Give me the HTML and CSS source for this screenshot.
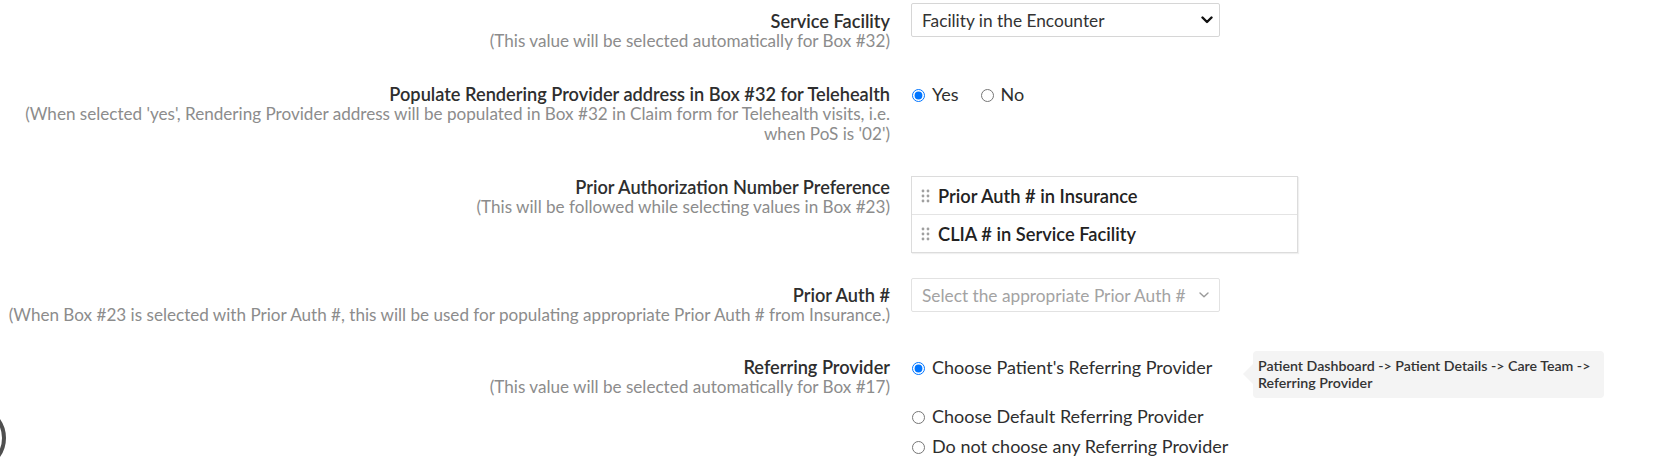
FILE: index.html
```html
<!DOCTYPE html>
<html lang="en">
<head>
<meta charset="utf-8">
<title>Claim Settings</title>
<link rel="stylesheet" href="styles.css">
</head>
<body>
<div class="form">
  <div class="row row-1">
    <div class="label-col pad-8">
      <div class="label">Service Facility</div>
      <div class="hint">(This value will be selected automatically for Box #32)</div>
    </div>
    <div class="control-col">
      <div class="select">
        <span class="select-value">Facility in the Encounter</span>
        <svg class="chev" width="12" height="8" viewBox="0 0 12 8"><path d="M1.5 1.5 L6 6 L10.5 1.5" fill="none" stroke="#111" stroke-width="2.4" stroke-linecap="round" stroke-linejoin="round"/></svg>
      </div>
    </div>
  </div>

  <div class="row row-2">
    <div class="label-col">
      <div class="label">Populate Rendering Provider address in Box #32 for Telehealth</div>
      <div class="hint">(When selected 'yes', Rendering Provider address will be populated in Box #32 in Claim form for Telehealth visits, i.e.<br>when PoS is '02')</div>
    </div>
    <div class="control-col">
      <div class="radio-inline">
        <label class="radio"><input type="radio" name="tele" checked><span>Yes</span></label>
        <label class="radio"><input type="radio" name="tele"><span>No</span></label>
      </div>
    </div>
  </div>

  <div class="row row-3">
    <div class="label-col pad-1">
      <div class="label">Prior Authorization Number Preference</div>
      <div class="hint">(This will be followed while selecting values in Box #23)</div>
    </div>
    <div class="control-col">
      <div class="sort-list">
        <div class="sort-item">
          <svg class="handle" width="10" height="14" viewBox="0 0 10 14"><g fill="#a0a0a0"><circle cx="2" cy="2" r="1.4"/><circle cx="7" cy="2" r="1.4"/><circle cx="2" cy="7" r="1.4"/><circle cx="7" cy="7" r="1.4"/><circle cx="2" cy="12" r="1.4"/><circle cx="7" cy="12" r="1.4"/></g></svg>
          <span>Prior Auth # in Insurance</span>
        </div>
        <div class="sort-item">
          <svg class="handle" width="10" height="14" viewBox="0 0 10 14"><g fill="#a0a0a0"><circle cx="2" cy="2" r="1.4"/><circle cx="7" cy="2" r="1.4"/><circle cx="2" cy="7" r="1.4"/><circle cx="7" cy="7" r="1.4"/><circle cx="2" cy="12" r="1.4"/><circle cx="7" cy="12" r="1.4"/></g></svg>
          <span>CLIA # in Service Facility</span>
        </div>
      </div>
    </div>
  </div>

  <div class="row row-4">
    <div class="label-col pad-7">
      <div class="label">Prior Auth #</div>
      <div class="hint">(When Box #23 is selected with Prior Auth #, this will be used for populating appropriate Prior Auth # from Insurance.)</div>
    </div>
    <div class="control-col">
      <div class="select select-muted">
        <span class="select-placeholder">Select the appropriate Prior Auth #</span>
        <svg class="chev" width="12" height="8" viewBox="0 0 12 8"><path d="M2 2 L6 5.8 L10 2" fill="none" stroke="#9a9a9a" stroke-width="1.4" stroke-linecap="round" stroke-linejoin="round"/></svg>
      </div>
    </div>
  </div>

  <div class="row row-5">
    <div class="label-col pad-6">
      <div class="label">Referring Provider</div>
      <div class="hint">(This value will be selected automatically for Box #17)</div>
    </div>
    <div class="control-col">
      <div class="option-first">
        <label class="radio"><input type="radio" name="ref" checked><span>Choose Patient's Referring Provider</span></label>
        <div class="tooltip">Patient Dashboard -&gt; Patient Details -&gt; Care Team -&gt; Referring Provider</div>
      </div>
      <div class="option-list">
        <label class="radio"><input type="radio" name="ref"><span>Choose Default Referring Provider</span></label>
        <label class="radio"><input type="radio" name="ref"><span>Do not choose any Referring Provider</span></label>
      </div>
    </div>
  </div>
</div>
<div class="chat-bubble"></div>
</body>
</html>
```

FILE: styles.css
```css
html, body {
  margin: 0;
  padding: 0;
  background: #ffffff;
}
body {
  font-family: Lato, "Noto Sans", "Liberation Sans", sans-serif;
  color: #333333;
  overflow: hidden;
  height: 462px;
  position: relative;
}
.form {
  display: flex;
  flex-direction: column;
  padding: 3px 0 0 8px;
}
.row {
  display: grid;
  grid-template-columns: 882px auto;
  column-gap: 21px;
  align-items: start;
}
.row-2 { margin-top: 33px; }
.row-3 { margin-top: 32px; }
.row-4 { margin-top: 25px; }
.row-5 { margin-top: 26px; }

.label-col {
  text-align: right;
}
.pad-1 { padding-top: 1px; }
.pad-6 { padding-top: 6px; }
.pad-7 { padding-top: 7px; }
.pad-8 { padding-top: 8px; }

.label {
  font-size: 18.2px;
  font-weight: 600;
  line-height: 20px;
  color: #2e2e2e;
  white-space: nowrap;
}
.hint {
  font-size: 17.1px;
  line-height: 20px;
  color: #8c8c8c;
  white-space: nowrap;
}

.control-col {
  display: flex;
  flex-direction: column;
}

.select {
  box-sizing: border-box;
  width: 309px;
  height: 34px;
  border: 1px solid #d6d6d6;
  border-radius: 2px;
  display: flex;
  align-items: center;
  justify-content: space-between;
  padding: 0 6px 0 10px;
  font-size: 17.3px;
  background: #fff;
}
.select-value { color: #333; }
.select-muted { border-color: #e2e2e2; }
.select-muted .chev { margin-right: 3px; }
.select-placeholder { color: #a3a3a3; }
.chev { display: block; }

.radio-inline {
  display: flex;
  gap: 21px;
}
.radio {
  display: flex;
  align-items: center;
  gap: 7px;
  font-size: 18px;
  line-height: 20px;
  color: #2e2e2e;
  white-space: nowrap;
}
.radio input {
  margin: 2px 0 0 1px;
  width: 13px;
  height: 13px;
}

.sort-list {
  width: 387px;
  box-sizing: border-box;
  border: 1px solid #dcdcdc;
  box-shadow: 1px 1px 1px rgba(0,0,0,0.06);
}
.sort-item {
  height: 37px;
  box-sizing: border-box;
  display: flex;
  align-items: center;
  gap: 7px;
  padding-left: 9px;
  font-size: 18.3px;
  font-weight: 600;
  color: #222;
}
.sort-item + .sort-item {
  border-top: 1px solid #e4e4e4;
  height: 38px;
}
.handle { display: block; }

.option-first {
  display: grid;
  grid-template-columns: 342px auto;
  align-items: start;
}
.option-first .radio { padding-top: 6px; }
.tooltip {
  position: relative;
  box-sizing: border-box;
  width: 351px;
  height: 47px;
  background: #f4f4f4;
  border-radius: 4px;
  padding: 6px 3px 0 5px;
  font-size: 14.2px;
  font-weight: 600;
  line-height: 17px;
  color: #333;
}
.tooltip::before {
  content: "";
  position: absolute;
  left: -10px;
  top: 13px;
  border-style: solid;
  border-width: 10px 10px 10px 0;
  border-color: transparent #f4f4f4 transparent transparent;
}
.option-list {
  display: flex;
  flex-direction: column;
  gap: 10px;
  margin-top: 8px;
}

.chat-bubble {
  position: absolute;
  left: -60px;
  top: 405px;
  width: 58px;
  height: 58px;
  border-radius: 50%;
  border: 4px solid #4f4f4f;
  box-sizing: content-box;
}
```
